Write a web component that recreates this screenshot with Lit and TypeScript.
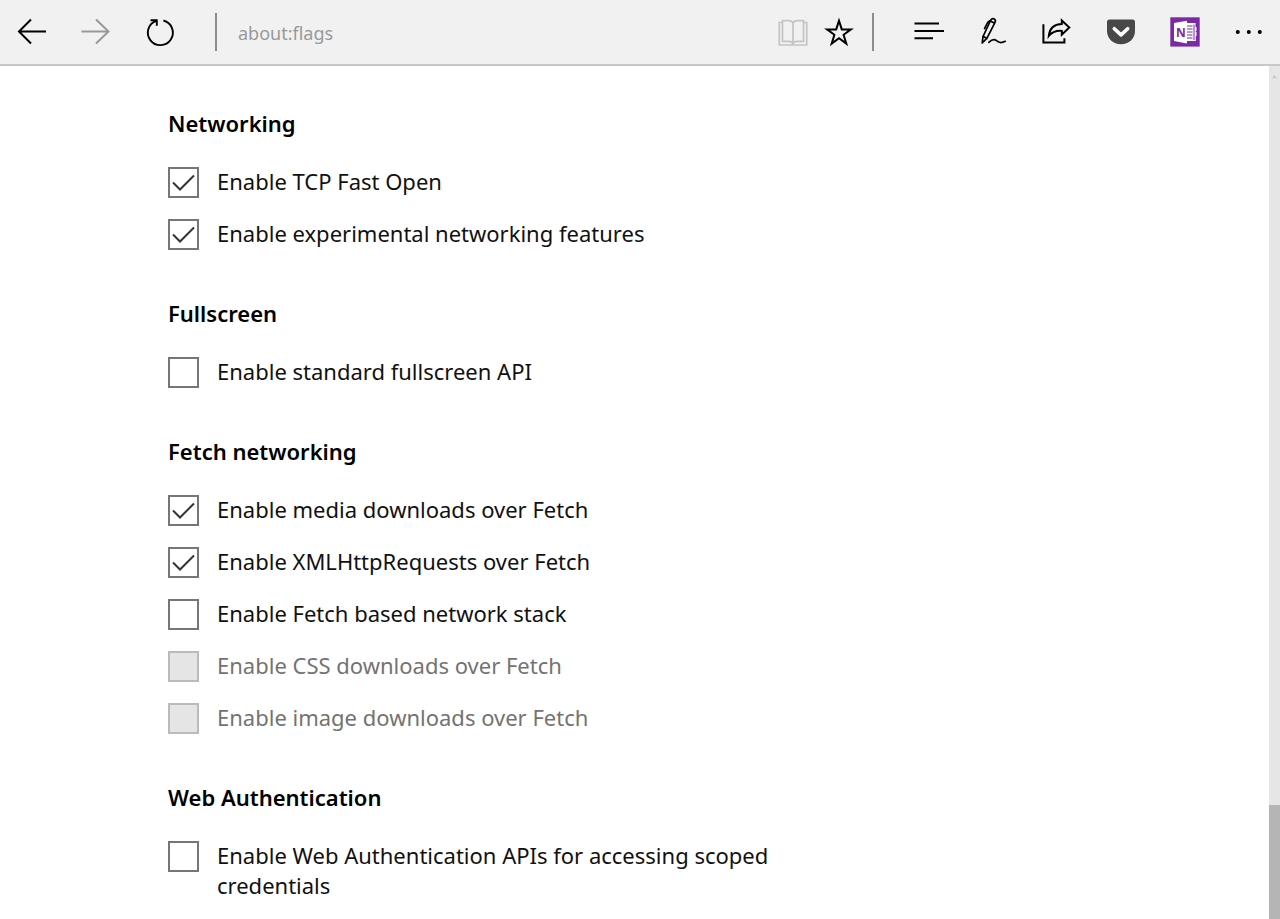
import { LitElement, html, css, svg, nothing } from "lit";
import { customElement, property, state } from "lit/decorators.js";

interface Flag {
  id: string;
  label: string;
  checked?: boolean;
  disabled?: boolean;
}

interface FlagGroup {
  title: string;
  flags: Flag[];
}

const GROUPS: FlagGroup[] = [
  {
    title: "Networking",
    flags: [
      { id: "tcp-fast-open", label: "Enable TCP Fast Open", checked: true },
      { id: "experimental-net", label: "Enable experimental networking features", checked: true },
    ],
  },
  {
    title: "Fullscreen",
    flags: [{ id: "fullscreen-api", label: "Enable standard fullscreen API" }],
  },
  {
    title: "Fetch networking",
    flags: [
      { id: "fetch-media", label: "Enable media downloads over Fetch", checked: true },
      { id: "fetch-xhr", label: "Enable XMLHttpRequests over Fetch", checked: true },
      { id: "fetch-stack", label: "Enable Fetch based network stack" },
      { id: "fetch-css", label: "Enable CSS downloads over Fetch", disabled: true },
      { id: "fetch-image", label: "Enable image downloads over Fetch", disabled: true },
    ],
  },
  {
    title: "Web Authentication",
    flags: [{ id: "web-authn", label: "Enable Web Authentication APIs for accessing scoped credentials" }],
  },
];

const ICONS: Record<string, unknown> = {
  back: svg`<g stroke-width="2"><path d="M3 15.5H30M15 3.500L3 15.500L15 27.500"/></g>`,
  forward: svg`<g stroke-width="2"><path d="M1.500 15.500H29M16 3.500L28.500 15.500L16 27.500"/></g>`,
  refresh: svg`<path stroke-width="1.900" d="M19.400 4.500A12.500 12.500 0 1 1 12.300 4.800M6.500 4.200H12.800V9.800"/>`,
  reading: svg`<g stroke-width="1.700"><path d="M5.500 4.700H11.500Q15 4.700 16 7Q17 4.700 20.500 4.700H26.500V25.300H20.500Q17 25.300 16 27.500Q15 25.300 11.500 25.300H5.500ZM16 7V29"/><path d="M5.500 6.500H2.300V29H29.700V6.500H26.500"/></g>`,
  star: svg`<path stroke-width="2" d="M16 4.800L18.800 13.400L27.900 13.400L20.600 18.800L23.300 27.600L16 22.200L8.700 27.600L11.400 18.800L4.100 13.400L13.200 13.400Z"/>`,
  hub: svg`<path stroke-width="2" d="M2.500 7.500H27M2.500 15H32M2.500 22.300H21"/>`,
  note: svg`<g stroke-width="1.700" stroke-linejoin="round" stroke-linecap="round"><path d="M6.200 27L7 20.500L14.500 4.600Q16 1.700 18.300 3Q20.200 4.200 18.900 6.700L11 22.200Z"/><path d="M7.300 20.500L10.800 22.300M14.300 5L18.200 7M14.500 4.700Q12.700 4.800 11.600 6.700L8.600 12.500"/><path d="M12.800 26.300Q17.500 22 20.500 24.700C22.500 26.600 24.800 27.700 29.300 25.300"/></g>`,
  share: svg`<g stroke-width="2"><path d="M3.400 8.300V26.400H24.400V22.300"/><path d="M21.800 4.400L29.300 11.400L21.800 18.600V14.900C16 14.500 12 16 8.800 20C9.500 12.500 14 8.300 21.800 8Z"/></g>`,
  pocket: svg`<path fill="#484848" stroke="none" d="M5.500 3.500H28.500Q31 3.500 31 6V15C31 22.500 25 28.300 17 28.300S3 22.500 3 15V6Q3 3.500 5.500 3.500Z"/><path stroke="#fff" stroke-width="3.600" stroke-linecap="round" stroke-linejoin="round" d="M10.300 12.700L17 18.900L23.700 12.700"/>`,
  onenote: svg`<rect x="2.300" y="1.300" width="29.400" height="29.300" fill="#7b2aa5" stroke="none"/><path fill="#fff" stroke="none" d="M19 7H27.500V11H28.500V15H27.800V16H28.500V20H27.800V25H19Z"/><path stroke="#7b2aa5" stroke-width="1" d="M19 10H24.500M19 13H24.500M19 16H24.500M19 19H24.500M19 22H24.500M26 8.500V24"/><path fill="#fff" stroke="none" d="M6 7L19 4.700V27.400L6 25Z"/><text x="8" y="20.500" font-family="Open Sans, sans-serif" font-size="12" font-weight="700" fill="#7b2aa5" stroke="none">N</text>`,
  more: svg`<g fill="currentColor" stroke="none"><circle cx="5.800" cy="16" r="2"/><circle cx="16.800" cy="16" r="2"/><circle cx="27.800" cy="16" r="2"/></g>`,
};

@customElement("tool-button")
class ToolButton extends LitElement {
  @property() icon = "";
  @property() label = "";
  @property({ type: Boolean }) disabled = false;
  @property({ type: Boolean, reflect: true }) compact = false;

  static styles = css`
    :host {
      display: block;
      flex: none;
      width: 64px;
    }
    :host([compact]) {
      width: 46px;
    }
    .button {
      display: grid;
      place-items: center;
      width: 100%;
      height: 64px;
      padding: 0;
      border: 0;
      background: none;
      color: #000;
    }
    .button:disabled {
      color: #999;
    }
    :host([compact]) .button:disabled {
      color: #c4c4c4;
    }
    .icon {
      display: block;
      width: 32px;
      height: 32px;
      overflow: visible;
      fill: none;
      stroke: currentColor;
    }
  `;

  render() {
    return html`<button class="button" type="button" aria-label=${this.label} ?disabled=${this.disabled}>
      <svg class="icon" viewBox="0 0 32 32" aria-hidden="true">${ICONS[this.icon]}</svg>
    </button>`;
  }
}

@customElement("flag-option")
class FlagOption extends LitElement {
  @property({ attribute: false }) flag!: Flag;
  @state() private on = false;

  static styles = css`
    :host {
      display: block;
    }
    .row {
      display: flex;
      align-items: flex-start;
      gap: 18px;
    }
    .box {
      display: grid;
      flex: none;
      padding-top: 1px;
    }
    .input,
    .mark {
      grid-area: 1 / 1;
      width: 31px;
      height: 31px;
      margin: 0;
    }
    .input {
      appearance: none;
      box-sizing: border-box;
      border: 2px solid #767676;
      border-radius: 0;
      background: #fff;
    }
    .input:disabled {
      border-color: #bbb;
      background: #e5e5e5;
    }
    .mark {
      pointer-events: none;
      fill: none;
      stroke: #333;
      stroke-width: 2;
    }
    .text {
      color: #111;
    }
    .input-off {
      color: #737373;
    }
  `;

  willUpdate(changed: Map<string, unknown>) {
    if (changed.has("flag")) this.on = !!this.flag.checked;
  }

  private toggle(e: Event) {
    this.on = (e.target as HTMLInputElement).checked;
  }

  render() {
    const { id, label, disabled } = this.flag;
    return html`<div class="row">
      <span class="box">
        <input class="input" type="checkbox" id=${id} .checked=${this.on} ?disabled=${disabled} @change=${this.toggle} />
        ${this.on
          ? html`<svg class="mark" viewBox="0 0 31 31" aria-hidden="true"><path d="M5 15.500L12 22.500L26 8.500" /></svg>`
          : nothing}
      </span>
      <label class="text ${disabled ? "input-off" : ""}" for=${id}>${label}</label>
    </div>`;
  }
}

@customElement("app-root")
class AppRoot extends LitElement {
  static styles = css`
    :host {
      display: flex;
      flex-direction: column;
      height: 100vh;
      overflow: hidden;
      background: #fff;
      color: #000;
      font: 22px/30px "Noto Sans", "Open Sans", sans-serif;
    }
    .toolbar {
      display: flex;
      flex: none;
      align-items: center;
      border-bottom: 2px solid #c8c8c8;
      background: #f1f1f1;
    }
    .divider {
      flex: none;
      width: 2px;
      height: 38px;
      background: #8c8c8c;
    }
    .divider.start {
      margin-left: 23px;
    }
    .divider.end {
      margin: 0 22px 0 10px;
    }
    .address {
      flex: 1;
      box-sizing: border-box;
      min-width: 0;
      height: 38px;
      padding: 2px 21px 0;
      border: 0;
      background: none;
      color: #999;
      font: 18px/26px "Noto Sans", "Open Sans", sans-serif;
    }
    .page {
      display: flex;
      flex: 1;
      min-height: 0;
    }
    .content {
      display: flex;
      flex: 1;
      flex-direction: column;
      gap: 48px;
      padding: 42px 40px 0 168px;
      overflow: hidden;
    }
    .group {
      display: flex;
      flex: none;
      flex-direction: column;
      gap: 20px;
      max-width: 620px;
    }
    .title {
      margin: 0 0 8px;
      font-size: 22px;
      line-height: 30px;
      font-weight: 600;
    }
    .scroll {
      display: flex;
      flex: none;
      flex-direction: column;
      width: 11px;
      background: #e6e6e6;
    }
    .track {
      flex: 738;
      padding-top: 9px;
    }
    .arrow {
      display: block;
      width: 5px;
      height: 4px;
      margin: 0 auto;
      fill: #bdbdbd;
    }
    .thumb {
      flex: 115;
      background: #b5b5b5;
    }
  `;

  render() {
    return html`
      <header class="toolbar">
        <tool-button icon="back" label="Back"></tool-button>
        <tool-button icon="forward" label="Forward" disabled></tool-button>
        <tool-button icon="refresh" label="Refresh"></tool-button>
        <span class="divider start"></span>
        <input class="address" type="text" aria-label="Address" value="about:flags" />
        <tool-button icon="reading" label="Reading view" compact disabled></tool-button>
        <tool-button icon="star" label="Add to favorites" compact></tool-button>
        <span class="divider end"></span>
        <tool-button icon="hub" label="Hub"></tool-button>
        <tool-button icon="note" label="Make a web note"></tool-button>
        <tool-button icon="share" label="Share"></tool-button>
        <tool-button icon="pocket" label="Save to Pocket"></tool-button>
        <tool-button icon="onenote" label="OneNote"></tool-button>
        <tool-button icon="more" label="More"></tool-button>
      </header>
      <div class="page">
        <main class="content">
          ${GROUPS.map(
            (g) => html`<section class="group">
              <h2 class="title">${g.title}</h2>
              ${g.flags.map((f) => html`<flag-option .flag=${f}></flag-option>`)}
            </section>`
          )}
        </main>
        <div class="scroll" aria-hidden="true">
          <div class="track"><svg class="arrow" viewBox="0 0 5 4"><path d="M0 4L2.500 0L5 4L2.500 2.500Z" /></svg></div>
          <div class="thumb"></div>
        </div>
      </div>
    `;
  }
}
